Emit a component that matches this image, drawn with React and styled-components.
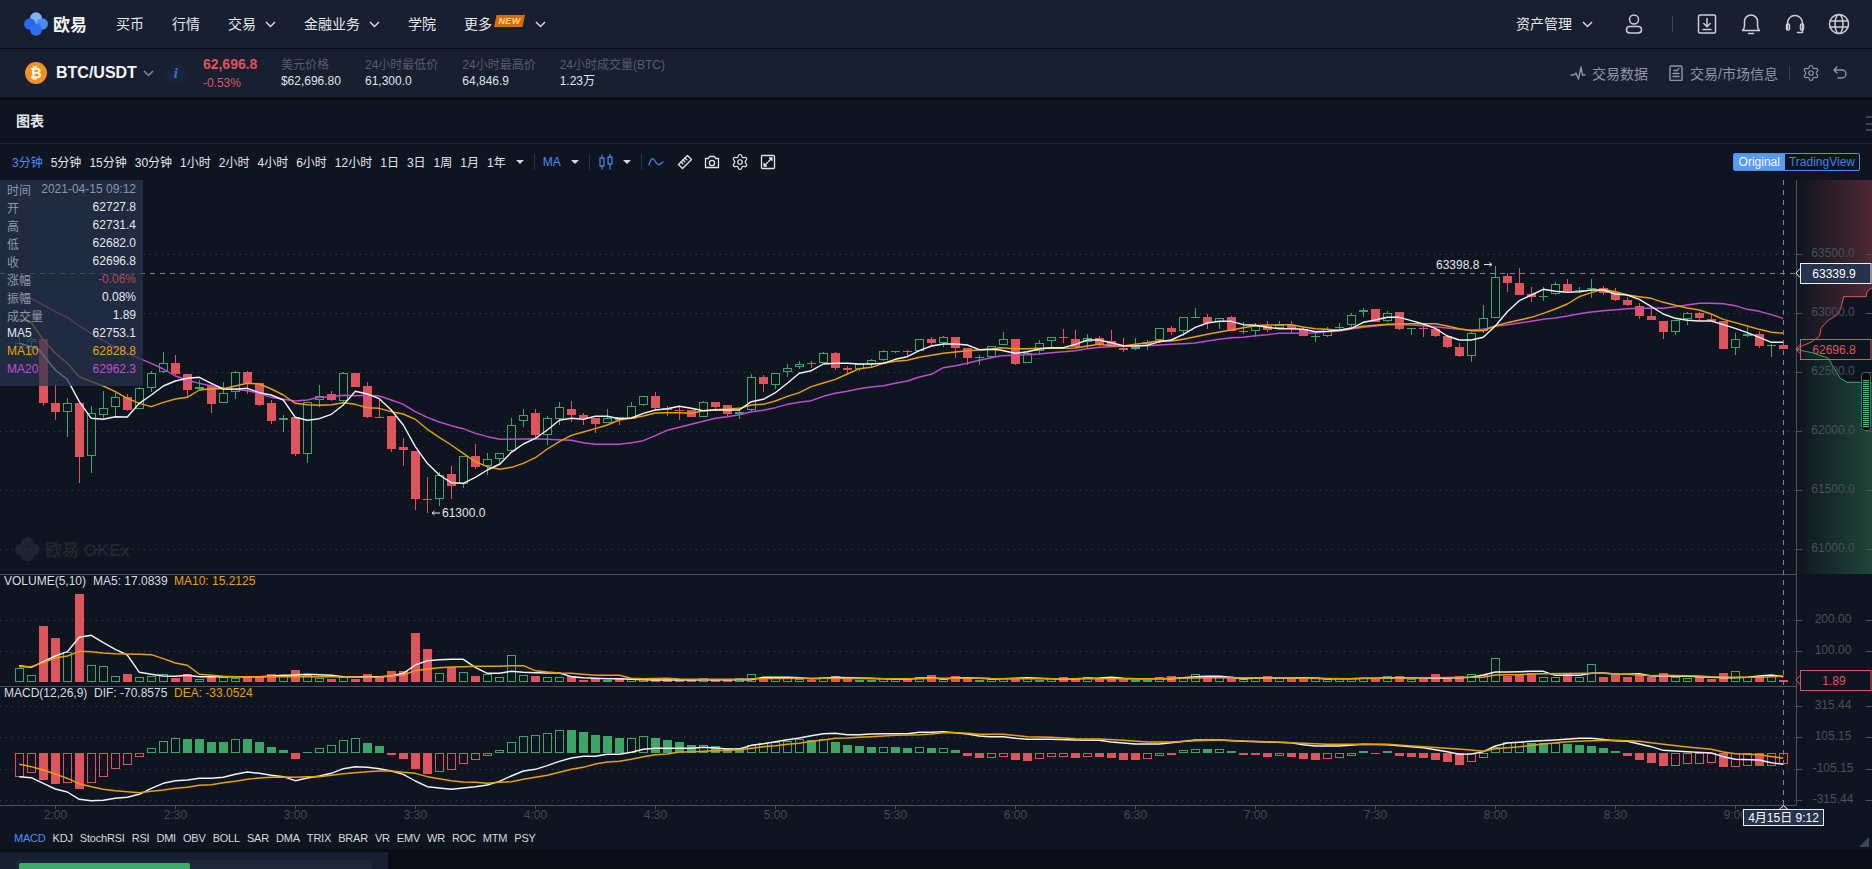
import React from "react";
import styled, { createGlobalStyle } from "styled-components";
import { Settings } from "lucide-react";

const GlobalStyle = createGlobalStyle`
  html, body {
    margin: 0;
    padding: 0;
    height: 100%;
    overflow: hidden;
    background: #0a0d15;
    font-family: "Liberation Sans", "Noto Sans CJK SC", sans-serif;
  }
  * { box-sizing: border-box; }
`;

const RED = "#dd555c";
const GREEN = "#3fa566";
const WHITE_LINE = "#f2f2f2";
const ORANGE = "#e9a00c";
const PURPLE = "#c04ccf";

// candle bodies and wicks, read off the picture at 3x: [top, bottom, wickTop, wickBottom, isRed]
const candleRows = [
  { base: 170, rows: [
    [520,532,498,540,0],[508,516,500,565,0],[507,698,507,708,1],[699,725,643,750,1],[700,725,685,800,0],
    [699,860,699,938,1],[730,859,708,908,0],[715,734,663,745,0],[682,712,668,745,0],[682,720,672,722,1],
    [655,716,650,718,0],[610,653,604,665,0],[580,607,546,610,0],[579,612,555,615,1],[612,660,612,682,1],
    [650,658,630,660,0],[648,701,640,728,1],[670,698,636,700,0],[607,667,603,687,0],[606,640,603,671,1],
    [640,705,640,708,1],[699,752,690,761,1],[745,751,735,785,0],[741,852,741,858,1],[695,853,695,878,0],
    [677,691,645,712,0],[673,690,663,692,1],[610,692,606,695,0],[609,650,609,650,1],[648,741,636,743,1],
    [742,743,690,743,1],[738,837,738,845,1],[832,839,805,888,1],[843,986,843,1020,1],[987,988,920,1028,1],
    [914,988,905,1007,0],[912,947,888,987,1],[859,943,859,953,0],[858,890,822,896,1],[868,888,850,914,0],
    [850,866,850,878,0],
  ]},
  { base: 280, rows: [
    [436,514,415,520,0],[406,424,388,440,0],[400,465,388,470,1],[415,466,407,494,0],[382,416,366,434,0],
    [387,405,363,425,1],[405,414,400,434,1],[414,432,414,458,1],[415,428,388,430,0],[412,420,412,434,1],
    [379,418,366,418,0],[349,374,349,378,0],[348,384,336,390,1],[384,389,379,407,1],[391,392,380,419,1],
    [390,411,390,412,1],[367,410,363,410,0],[366,381,366,392,1],[376,402,376,408,1],[395,401,390,416,0],
    [292,390,282,392,0],[291,312,286,335,1],[280,314,280,327,0],[265,277,252,291,0],[253,262,243,266,0],
    [249,250,243,264,1],[220,248,217,250,0],[219,264,216,270,1],[264,270,258,279,1],[252,268,252,272,0],
    [241,252,238,265,0],[214,239,210,242,0],[214,215,214,219,0],[213,214,210,228,1],[178,214,178,214,0],
    [178,189,171,195,1],[172,188,168,200,0],[171,204,171,234,1],[204,234,204,254,1],[232,233,226,254,0],
    [199,230,199,232,0],
  ]},
  { base: 250, rows: [
    [268,284,246,286,0],[267,342,267,345,1],[310,338,302,340,0],[278,302,270,315,0],[262,274,262,290,0],
    [262,263,237,279,1],[267,292,240,295,1],[265,276,252,295,0],[265,283,258,288,1],[274,287,240,290,1],
    [294,300,264,306,1],[290,296,264,301,0],[275,282,270,300,0],[235,271,235,280,0],[235,246,228,255,1],
    [202,244,200,258,0],[202,203,174,203,0],[202,220,192,237,1],[203,216,203,237,0],[202,242,197,243,1],
    [244,245,216,252,0],[229,242,220,261,0],[228,239,213,246,1],[224,234,213,236,0],[224,238,213,250,1],
    [238,258,230,258,1],[259,260,250,276,0],[236,257,232,262,0],[230,233,220,236,0],[194,226,190,232,0],
    [179,187,175,200,0],[178,215,178,215,1],[188,214,184,216,0],[186,237,186,240,1],[233,234,233,255,0],
    [233,234,225,261,1],[237,258,232,260,1],[259,291,255,293,1],[291,318,280,320,1],[248,317,246,335,0],
    [203,244,166,250,0],[82,203,48,203,0],
  ]},
  { base: 240, rows: [
    [107,129,100,155,1],[129,165,84,165,1],[162,171,141,185,1],[167,172,142,182,0],[133,163,127,165,0],
    [132,154,117,157,1],[150,151,140,160,0],[145,146,117,173,0],[145,158,138,164,1],[157,180,144,183,1],
    [180,194,172,197,1],[197,228,190,236,1],[228,239,208,240,1],[243,275,243,296,1],[241,277,240,284,0],
    [220,238,217,254,0],[219,234,215,242,1],[238,244,225,244,1],[244,326,244,327,1],[296,325,280,344,0],
    [283,289,260,290,0],[283,318,272,323,1],[315,316,312,350,0],[316,326,316,327,1],
  ]},
];

const candles = candleRows.flatMap(({ base, rows }) =>
  rows.map(([t, b, wt, wb, red]) => ({
    top: base + t / 3,
    bottom: base + b / 3,
    wickTop: base + wt / 3,
    wickBottom: base + wb / 3,
    red: !!red,
  }))
);

const volumes = [
  295,316,-168,-204,245,-72,286,289,319,-312,321,318,311,-323,-313,328,-319,322,325,-321,
  -320,-312,318,-300,314,325,-327,322,-327,-312,-320,-303,-303,-189,-237,310,-292,307,-318,313,
  322,256,316,-318,322,322,-317,-330,-325,329,-325,328,328,-325,-325,-327,-327,325,-327,-327,
  325,313,-325,325,323,328,-330,320,-318,-325,330,330,323,328,-327,320,-315,328,-318,-325,
  329,328,325,-325,325,329,325,-321,-325,322,-325,-322,-325,329,329,322,-318,322,313,-321,
  322,-322,328,325,-318,325,-325,-325,322,328,325,325,325,-325,319,-318,328,-325,-312,-322,
  -318,312,315,265,-318,-314,-310,320,320,-312,320,283,-322,-314,-322,-316,-322,-310,322,325,
  -322,-328,-310,304,322,-318,318,-331,
];

const macdValues = [
  620,608,630,642,638,657,638,620,596,584,
  560,535,514,505,507,507,516,516,508,507,
  516,531,540,567,547,533,526,511,505,519,
  528,555,567,598,612,605,601,581,569,557,
  541,517,499,495,490,481,480,486,495,498,
  504,505,499,504,510,516,525,526,529,534,
  534,525,520,516,512,508,510,507,516,525,
  528,531,532,531,534,532,534,535,540,558,
  564,563,560,570,573,567,560,560,564,560,
  561,564,570,570,567,557,555,541,538,537,
  538,543,555,555,561,557,561,567,570,567,
  564,557,543,552,543,558,561,564,570,576,
  585,575,563,532,517,517,520,520,520,521,
  526,529,535,543,557,570,579,587,587,581,
  581,578,590,590,587,587,587,583,
];
const macdKinds =
  "rrRRrRrrrr" + "rgggGGGGgG" + "GGGRgggggG" + "GRRRRrrrrr" + "ggggggGGGG" +
  "GggGGGGgGG" + "GgggggGgGG" + "GGgGGgGgGR" + "RrrRRrrrRr" + "RRRRrrRggG" +
  "gGRRRrRRRr" + "rrGRGRRRRR" + "RrrgggGGgG" + "GGGGRRRRrr" + "rrRrrRrr";

// glue pieces together: points of a later piece replace what came before from its first x on
const pieces = (...parts) =>
  parts.reduce((all, [xBase, yBase, pts]) => {
    const mapped = pts.map(([x, y]) => [xBase + x / 3, yBase + y / 3]);
    return [...all.filter((p) => p[0] < mapped[0][0]), ...mapped];
  }, []);

const toPoints = (pts) => pts.map(([x, y]) => `${x.toFixed(1)},${y.toFixed(1)}`).join(" ");

const ma5 = pieces(
  [0, 170, [[58,520],[94,530],[118,540],[166,600],[202,628],[238,695],[274,745],[310,748],[346,740],[382,741],[418,700],[454,675],[490,648],[526,633],[562,625],[598,622],[634,640],[670,657],[706,658],[742,655],[778,668],[814,675],[850,690],[886,742],[922,751],[958,746],[994,733],[1030,705],[1066,664],[1102,672],[1138,686],[1174,720],[1210,765],[1246,830],[1282,880],[1318,915],[1354,938],[1390,940],[1426,922],[1462,900],[1500,882]]],
  [500, 280, [[0,552],[34,517],[70,492],[106,475],[142,450],[178,421],[214,415],[250,418],[286,409],[322,409],[358,416],[394,414],[430,400],[466,390],[502,386],[538,379],[574,385],[610,392],[646,390],[682,390],[718,390],[754,365],[790,358],[826,338],[862,310],[898,280],[934,272],[970,252],[1006,250],[1042,250],[1078,252],[1114,252],[1150,250],[1186,238],[1222,230],[1258,212],[1294,198],[1330,192],[1366,192],[1402,195],[1438,209],[1474,208],[1500,212]]],
  [1000, 250, [[0,300],[46,310],[82,305],[118,297],[154,293],[190,293],[226,283],[262,270],[298,270],[334,278],[370,287],[406,288],[442,286],[478,275],[514,270],[550,253],[586,232],[622,219],[658,214],[694,214],[730,224],[766,226],[802,232],[838,236],[874,236],[910,238],[946,245],[982,244],[1018,241],[1054,235],[1090,217],[1126,210],[1162,202],[1198,202],[1234,212],[1270,222],[1306,235],[1342,258],[1378,270],[1414,270]]],
  [1400, 240, [[250,292],[286,258],[322,215],[358,182],[394,165],[430,148],[466,154],[502,157],[538,155],[574,150],[610,150],[646,162],[682,165],[718,178],[754,200],[790,222],[826,235],[862,241],[898,243],[934,243],[970,254],[1006,265],[1042,278],[1078,292],[1114,307],[1150,307]]]
);

const ma10 = pieces(
  [0, 170, [[58,447],[94,458],[130,510],[166,550],[202,580],[238,620],[274,635],[310,648],[346,665],[382,685],[418,700],[454,710],[490,697],[526,687],[562,682],[598,660],[634,656],[670,656],[706,648],[742,640],[778,642],[814,657],[850,675],[886,700],[922,704],[958,706],[994,704],[1030,698],[1066,703],[1102,713],[1138,715],[1174,725],[1210,732],[1246,748],[1282,778],[1318,802],[1354,825],[1390,850],[1426,875],[1462,890],[1500,898]]],
  [500, 280, [[0,568],[34,562],[70,550],[106,533],[142,507],[178,485],[214,466],[250,456],[286,446],[322,435],[358,420],[394,415],[430,408],[466,399],[502,398],[538,398],[574,400],[610,392],[646,389],[682,387],[718,385],[754,375],[790,373],[826,363],[862,349],[898,338],[934,320],[970,309],[1006,298],[1042,282],[1078,266],[1114,262],[1150,250],[1186,244],[1222,241],[1258,232],[1294,226],[1330,220],[1366,216],[1402,212],[1438,210],[1474,208],[1500,205]]],
  [1000, 250, [[0,293],[46,296],[82,296],[118,295],[154,294],[190,295],[226,294],[262,288],[298,283],[334,287],[370,288],[406,283],[442,278],[478,272],[514,273],[550,268],[586,260],[622,253],[658,246],[694,240],[730,233],[766,227],[802,225],[838,224],[874,224],[910,231],[946,236],[982,238],[1018,241],[1054,234],[1090,229],[1126,226],[1162,223],[1198,222],[1234,221],[1270,221],[1306,221],[1342,228],[1378,236],[1414,242]]],
  [1400, 240, [[250,272],[286,258],[322,248],[358,240],[394,232],[430,220],[466,207],[502,192],[538,170],[574,158],[610,148],[646,155],[682,165],[718,170],[754,175],[790,187],[826,196],[862,204],[898,210],[934,222],[970,238],[1006,248],[1042,258],[1078,268],[1114,277],[1150,280]]]
);

const ma20 = pieces(
  [0, 170, [[58,365],[94,385],[130,405],[166,425],[202,442],[238,468],[274,490],[310,512],[346,533],[382,550],[418,565],[454,580],[490,597],[526,618],[562,630],[598,640],[634,648],[670,655],[706,658],[742,662],[778,670],[814,682],[850,688],[886,693],[922,690],[958,682],[994,680],[1030,676],[1066,677],[1102,676],[1138,678],[1174,690],[1210,703],[1246,725],[1282,742],[1318,756],[1354,767],[1390,776],[1426,790],[1462,800],[1500,808]]],
  [500, 280, [[0,478],[70,477],[106,476],[142,478],[178,479],[214,481],[250,488],[286,493],[322,493],[358,493],[394,488],[430,482],[466,467],[502,451],[538,442],[574,433],[610,424],[646,415],[682,410],[718,404],[754,395],[790,391],[826,383],[862,373],[898,367],[934,362],[970,349],[1006,340],[1042,334],[1078,326],[1114,321],[1150,317],[1186,310],[1222,303],[1258,291],[1294,283],[1330,263],[1366,257],[1402,250],[1438,241],[1474,233],[1500,229]]],
  [1000, 250, [[0,318],[46,315],[82,314],[118,312],[154,308],[190,305],[226,302],[262,296],[298,292],[334,290],[370,288],[406,288],[442,287],[478,285],[514,283],[550,281],[586,279],[622,273],[658,268],[694,263],[730,262],[766,257],[802,254],[838,250],[874,250],[910,250],[946,248],[982,245],[1018,243],[1054,237],[1090,232],[1126,228],[1162,224],[1198,224],[1234,225],[1270,227],[1306,230],[1342,234],[1378,238],[1414,240]]],
  [1400, 240, [[250,268],[286,258],[322,254],[358,249],[394,244],[430,238],[466,234],[502,228],[538,221],[574,216],[610,212],[646,209],[682,206],[718,205],[754,205],[790,205],[826,200],[862,195],[898,190],[934,190],[970,191],[1006,197],[1042,208],[1078,214],[1114,224],[1150,235]]]
);

const volMa5 = pieces(
  [0, 570, [[58,287],[94,292],[130,275],[166,258],[202,245],[238,202],[274,196],[310,218],[346,238],[382,255],[418,307],[454,313],[490,318],[526,319],[562,316],[598,320],[634,320],[670,320],[706,320],[742,320],[778,320],[814,318],[850,316],[886,315],[922,313],[958,314],[994,316],[1030,320],[1066,321],[1102,320],[1138,320],[1174,318],[1210,310],[1246,285],[1282,272],[1318,269],[1354,268],[1390,268],[1426,292],[1462,310],[1500,312]]],
  [490, 570, [[28,310],[64,304],[100,307],[136,308],[172,309],[208,309],[244,320],[280,323],[316,325],[352,326],[388,326],[424,328],[460,329],[496,330],[784,329],[820,322],[856,322],[892,322],[928,323],[964,326],[1000,325],[1036,322],[1072,323],[1108,324],[1144,325],[1180,326],[1216,327],[1252,327],[1288,325],[1324,323],[1360,327],[1396,324],[1432,323],[1468,325],[1500,326]]],
  [980, 570, [[34,327],[70,326],[106,325],[142,323],[178,325],[214,326],[250,327],[286,326],[322,325],[358,324],[394,322],[430,325],[466,326],[502,326],[538,326],[574,326],[610,323],[646,320],[682,319],[718,319],[754,322],[790,326],[826,324],[862,323],[898,324],[934,324],[970,323],[1006,325],[1042,326],[1078,326],[1114,326],[1150,325],[1186,325],[1222,324],[1258,323],[1294,323],[1330,323],[1366,325],[1402,324],[1438,323],[1474,322]]],
  [1400, 570, [[250,315],[286,306],[322,306],[358,305],[394,304],[430,304],[466,316],[502,316],[538,316],[574,310],[610,309],[646,312],[682,313],[718,311],[754,318],[790,318],[826,319],[862,319],[898,320],[934,322],[970,323],[1006,323],[1042,322],[1078,318],[1114,315],[1150,320]]]
);

const volMa10 = pieces(
  [0, 570, [[58,290],[94,290],[130,278],[166,264],[202,258],[238,244],[274,245],[310,249],[346,251],[382,252],[418,253],[454,254],[490,266],[526,279],[562,286],[598,313],[634,316],[670,319],[706,320],[1000,320],[1030,322],[1102,322],[1138,321],[1174,318],[1210,315],[1246,302],[1282,297],[1318,293],[1354,291],[1390,290],[1426,289],[1500,289]]],
  [490, 570, [[28,289],[64,287],[100,287],[136,302],[172,306],[208,309],[244,310],[280,313],[316,316],[388,316],[424,325],[460,326],[532,325],[568,327],[604,328],[748,328],[784,326],[1000,325],[1180,326],[1288,326],[1324,325],[1500,325]]],
  [980, 570, [[34,326],[500,326],[700,323],[900,324],[1100,326],[1200,325],[1474,322]]],
  [1400, 570, [[250,322],[286,315],[322,314],[358,314],[394,312],[430,311],[574,310],[610,310],[646,312],[682,313],[718,315],[754,317],[790,316],[862,317],[898,318],[934,320],[970,321],[1006,322],[1078,322],[1114,320],[1150,318]]]
);

const dif = pieces(
  [0, 570, [[58,620],[94,623],[130,640],[166,657],[202,666],[238,688],[274,692],[310,691],[346,685],[382,682],[418,673],[454,655],[490,640],[526,632],[562,630],[598,625],[634,625],[670,622],[706,613],[742,606],[778,610],[814,616],[850,620],[886,632],[922,624],[958,618],[994,610],[1030,596],[1066,590],[1102,592],[1138,596],[1174,603],[1210,613],[1246,633],[1282,650],[1318,654],[1354,658],[1390,654],[1426,650],[1462,645],[1500,638]]],
  [490, 570, [[28,634],[64,618],[100,603],[136,598],[172,587],[208,574],[244,564],[280,559],[316,559],[352,553],[388,553],[424,547],[460,538],[496,535],[604,535],[640,532],[676,534],[712,537],[748,537],[784,526],[820,521],[856,515],[892,509],[928,504],[964,497],[1000,491],[1036,490],[1072,494],[1108,494],[1144,492],[1180,491],[1252,491],[1288,487],[1324,487],[1360,485],[1396,488],[1432,492],[1468,498],[1500,500]]],
  [980, 570, [[34,500],[70,500],[106,505],[142,508],[214,508],[286,510],[358,511],[394,516],[466,522],[538,522],[574,518],[646,510],[718,510],[790,514],[862,516],[934,518],[970,524],[1006,528],[1078,528],[1150,523],[1222,524]]],
  [1400, 570, [[70,533],[142,545],[178,553],[214,552],[250,545],[286,528],[322,519],[394,514],[466,510],[538,505],[574,505],[646,512],[682,514],[754,530],[790,541],[862,545],[934,549],[970,560],[1006,568],[1078,570],[1114,578],[1150,583]]]
);

const dea = pieces(
  [0, 570, [[58,583],[94,590],[130,600],[166,612],[202,625],[238,641],[274,650],[310,658],[346,662],[382,665],[418,668],[454,664],[490,660],[526,655],[562,652],[598,646],[634,644],[670,638],[706,634],[742,628],[778,624],[814,622],[850,621],[886,622],[922,620],[958,620],[994,616],[1030,611],[1066,608],[1102,605],[1138,603],[1174,603],[1210,607],[1246,610],[1282,620],[1318,626],[1354,632],[1390,636],[1426,637],[1462,640],[1500,636]]],
  [490, 570, [[28,637],[64,635],[100,628],[136,622],[172,616],[208,607],[244,598],[280,592],[316,582],[352,576],[388,574],[424,568],[460,560],[496,554],[532,552],[568,546],[604,546],[640,544],[676,542],[712,541],[748,539],[784,535],[820,530],[856,527],[892,523],[928,520],[964,514],[1000,510],[1036,505],[1072,504],[1108,502],[1144,500],[1180,498],[1216,496],[1252,495],[1288,494],[1324,492],[1360,488],[1396,488],[1432,490],[1468,493],[1500,493]]],
  [980, 570, [[34,493],[70,493],[142,500],[214,502],[286,506],[358,507],[430,511],[502,516],[574,516],[646,512],[718,510],[790,513],[862,515],[934,518],[1006,521],[1042,523],[1222,523]]],
  [1400, 570, [[70,530],[142,535],[214,540],[250,544],[286,536],[358,530],[430,522],[502,515],[574,512],[646,511],[718,514],[790,523],[862,531],[934,538],[970,546],[1006,551],[1078,554],[1150,565]]]
);

const candleX = (i) => 19.5 + 12 * i;
const AXIS_X = 1796.5;

const priceGrid = [
  { y: 254.5, label: "63500.0" }, { y: 313.5, label: "63000.0" }, { y: 372.5, label: "62500.0" },
  { y: 431.5, label: "62000.0" }, { y: 490.5, label: "61500.0" }, { y: 549.5, label: "61000.0" },
];
const volGrid = [{ y: 620.5, label: "200.00" }, { y: 651.5, label: "100.00" }];
const macdGrid = [
  { y: 706.5, label: "315.44" }, { y: 737.5, label: "105.15" },
  { y: 769.5, label: "-105.15" }, { y: 800.5, label: "-315.44" },
];
const timeLabels = ["2:00","2:30","3:00","3:30","4:00","4:30","5:00","5:30","6:00","6:30","7:00","7:30","8:00","8:30","9:00"];

const redDepth = pieces([1772, 170, [[75,538],[90,528],[120,515],[143,498],[147,475],[155,465],[170,450],[195,435],[205,420],[215,380],[283,380],[285,365],[296,355],[300,355]]]);
const greenDepth = pieces([1772, 170, [[75,538],[90,542],[120,548],[170,565],[180,585],[205,625],[225,637],[270,637],[300,640]]]);

const Page = styled.div`
  width: 1872px;
  height: 869px;
  overflow: hidden;
  display: flex;
  flex-direction: column;
`;

const TopBar = styled.header`
  height: 49px;
  flex: none;
  display: flex;
  align-items: center;
  justify-content: space-between;
  padding: 0 22px 1px 24px;
  background: #181f30;
  border-bottom: 1px solid #0c0f17;
  color: #e4e7ec;
  font-size: 14px;
`;

const Left = styled.div`
  display: flex;
  align-items: center;
`;

const Logo = styled.div`
  display: flex;
  align-items: center;
  gap: 5px;
  margin-right: 29px;
  color: #f4f5f7;
  font-size: 17px;
  font-weight: 700;
`;

const Nav = styled.nav`
  display: flex;
  align-items: center;
  gap: 28px;
`;

const NavItem = styled.span`
  display: flex;
  align-items: center;
  padding-bottom: 2px;
  gap: ${(p) => (p.$tight ? "2px" : "0")};
`;

const Chevron = styled.svg`
  width: 11px;
  height: 7px;
  margin-left: ${(p) => p.$gap || 9}px;
  margin-top: ${(p) => p.$drop ?? 3}px;
  flex: none;
`;

const NewBadge = styled.span`
  width: 31px;
  height: 12px;
  background: #d96c07;
  clip-path: polygon(8% 0, 100% 0, 92% 100%, 0 100%);
  color: #ffd58f;
  font-size: 9px;
  font-weight: 700;
  font-style: italic;
  letter-spacing: 0.3px;
  line-height: 12px;
  text-align: center;
  margin-top: -3px;
`;

const UserTools = styled.div`
  display: flex;
  align-items: center;
`;

const ToolIcon = styled.svg`
  width: 22px;
  height: 22px;
  flex: none;
  margin-left: ${(p) => p.$left ?? 22}px;
  fill: none;
  stroke: #c9ced6;
  stroke-width: 1.5;
  stroke-linecap: round;
  stroke-linejoin: round;
`;

const Divider = styled.span`
  width: 1px;
  height: ${(p) => p.$h || 16}px;
  background: ${(p) => p.$c || "#3a4252"};
  margin-left: ${(p) => p.$left ?? 0}px;
  flex: none;
`;

const MarketBar = styled.section`
  height: 48px;
  flex: none;
  display: flex;
  align-items: center;
  justify-content: space-between;
  padding: 0 24px 0 25px;
  background: #181f30;
`;

const Coin = styled.span`
  width: 22px;
  height: 22px;
  border-radius: 50%;
  background: #f39221;
  color: #fff;
  font-family: "DejaVu Sans", sans-serif;
  font-size: 14px;
  font-weight: 700;
  line-height: 22px;
  text-align: center;
`;

const Pair = styled.span`
  margin-left: 9px;
  color: #f4f5f7;
  font-size: 16px;
  font-weight: 700;
`;

const InfoDot = styled.span`
  width: 20px;
  height: 20px;
  margin-left: 12px;
  margin-right: 17px;
  border-radius: 50%;
  background: #1a2438;
  color: #2a74e6;
  font-family: "Liberation Serif", serif;
  font-style: italic;
  font-weight: 700;
  font-size: 15px;
  line-height: 20px;
  text-align: center;
`;

const PriceBox = styled.div`
  width: 78px;
  color: ${RED};
`;

const LastPrice = styled.div`
  font-size: 14px;
  font-weight: 700;
  line-height: 18px;
`;

const PriceChange = styled.div`
  font-size: 12px;
  line-height: 16px;
  margin-top: 2px;
`;

const Stats = styled.div`
  display: flex;
  gap: 24px;
`;

const Stat = styled.div`
  font-size: 12px;
  line-height: 16px;
`;

const StatLabel = styled.div`
  color: #545c6e;
`;

const StatValue = styled.div`
  color: #dfe4ea;
`;

const MarketLinks = styled.div`
  display: flex;
  align-items: center;
  color: #8d96a8;
  font-size: 14px;
`;

const MarketIcon = styled.svg`
  width: 16px;
  height: 16px;
  flex: none;
  margin-left: ${(p) => p.$left ?? 0}px;
  margin-right: ${(p) => p.$right ?? 0}px;
  fill: none;
  stroke: #8d96a8;
  stroke-width: 1.4;
  stroke-linecap: round;
  stroke-linejoin: round;
`;

const MarketGear = styled(Settings)`
  width: 18px;
  height: 18px;
  flex: none;
  margin-left: 12px;
  stroke: #8d96a8;
  stroke-width: 1.6;
`;

const ChartPanel = styled.main`
  margin-top: 3px;
  flex: none;
  background: #0f1520;
`;

const PanelTitleBar = styled.div`
  height: 44px;
  display: flex;
  align-items: center;
  justify-content: space-between;
  padding: 0 0 3px 16px;
  border-bottom: 1px solid #1c2331;
  color: #e4e7ec;
  font-size: 14px;
  font-weight: 700;
`;

const Hamburger = styled.span`
  width: 6px;
  height: 15px;
  margin-top: 6px;
  background: repeating-linear-gradient(#3a4150 0 2px, transparent 2px 6.5px);
`;

const Toolbar = styled.div`
  height: 36px;
  display: flex;
  align-items: center;
  padding: 0 12px 1px;
  color: #e2e5ea;
  font-size: 12px;
`;

const Interval = styled.span`
  margin-right: 8px;
  color: ${(p) => (p.$active ? "#4a8df0" : "inherit")};
`;

const Caret = styled.span`
  width: 0;
  height: 0;
  margin-left: ${(p) => p.$left ?? 2}px;
  border-left: 4px solid transparent;
  border-right: 4px solid transparent;
  border-top: 4px solid #d4d8de;
`;

const ToolbarRule = styled.span`
  width: 1px;
  height: 16px;
  margin: 0 ${(p) => p.$right ?? 8}px 0 10px;
  background: #2c3443;
`;

const DrawIcon = styled.svg`
  width: 16px;
  height: 16px;
  flex: none;
  margin-right: ${(p) => p.$right ?? 12}px;
  fill: none;
  stroke: ${(p) => p.$c || "#e2e5ea"};
  stroke-width: 1.3;
  stroke-linecap: round;
  stroke-linejoin: round;
`;

const ToolbarGear = styled(Settings)`
  width: 18px;
  height: 18px;
  flex: none;
  margin-right: 11px;
  stroke: #e2e5ea;
  stroke-width: 1.6;
`;

const Switcher = styled.div`
  margin-left: auto;
  display: flex;
  height: 18px;
  border: 1px solid #4a8df0;
  border-radius: 2px;
  font-size: 12px;
  line-height: 16px;
`;

const SwitchOption = styled.span`
  padding: 0 ${(p) => (p.$on ? "5px" : "4px")};
  background: ${(p) => (p.$on ? "#5a9bf2" : "transparent")};
  color: ${(p) => (p.$on ? "#f3f7fd" : "#3f7fe6")};
`;

const ChartArea = styled.div`
  position: relative;
  height: 669px;
`;

const ChartSvg = styled.svg`
  display: block;
  width: 1872px;
  height: 669px;
  font-family: "Liberation Sans", "Noto Sans CJK SC", sans-serif;
  font-size: 12px;
`;

const InfoPanel = styled.div`
  position: absolute;
  left: 0;
  top: 0;
  width: 143px;
  height: 206px;
  padding: 0 7px;
  background: rgba(39, 53, 77, 0.72);
  font-size: 12px;
`;

const InfoRow = styled.div`
  height: 18px;
  display: flex;
  align-items: center;
  justify-content: space-between;
  color: ${(p) => p.$c || "#e6e8ec"};
`;

const InfoLabel = styled.span`
  color: ${(p) => p.$c || "#8e96a4"};
`;

const IndicatorRow = styled.div`
  position: absolute;
  left: 14px;
  top: 650px;
  display: flex;
  gap: 7px;
  color: #d5d9df;
  font-size: 11px;
  letter-spacing: -0.2px;
  line-height: 16px;
`;

const Indicator = styled.span`
  color: ${(p) => (p.$active ? "#4a8df0" : "inherit")};
`;

const BottomRow = styled.div`
  margin-top: 3px;
  width: 388px;
  height: 30px;
  padding: 8px 16px 0;
  background: #181f30;
`;

const TradeCard = styled.div`
  display: flex;
  height: 30px;
  padding: 3px;
  border-radius: 3px;
  background: #1e2637;
`;

const TradeTab = styled.span`
  width: 171px;
  height: 30px;
  border-radius: 2px;
  background: ${(p) => (p.$on ? "#3dad6b" : "transparent")};
  color: ${(p) => (p.$on ? "#fff" : "#8d96a8")};
  font-size: 14px;
  line-height: 26px;
  text-align: center;
`;

const ChevronIcon = ({ gap, color = "#d5d9df", drop }) => (
  <Chevron $gap={gap} $drop={drop} viewBox="0 0 11 7" fill="none" stroke={color} strokeWidth="1.5">
    <path d="M1 1l4.5 4.5L10 1" />
  </Chevron>
);

const LogoMark = ({ size = 24, mono }) => (
  <svg width={size} height={size} viewBox="0 0 24 24" style={{ flex: "none" }}>
    <circle cx="12" cy="6.3" r="6" fill={mono || "#7db4f6"} />
    <circle cx="5.8" cy="12" r="5.8" fill={mono || "#2b68e8"} />
    <circle cx="18.2" cy="12" r="5.8" fill={mono || "#4a8bf0"} />
    <circle cx="12" cy="17.7" r="6" fill={mono || "#2f6fee"} />
  </svg>
);

const Candle = ({ c, i }) => {
  const x = candleX(i);
  const color = c.red ? RED : GREEN;
  const top = Math.round(c.top);
  const bottom = Math.max(Math.round(c.bottom), top + 1);
  if (c.red || bottom - top < 3) {
    return (
      <g>
        <rect x={x - 0.5} y={c.wickTop} width="1" height={c.wickBottom - c.wickTop} fill={color} />
        <rect x={x - 4.5} y={top} width="9" height={bottom - top} fill={color} />
      </g>
    );
  }
  return (
    <g>
      <rect x={x - 0.5} y={c.wickTop} width="1" height={top - c.wickTop} fill={color} />
      <rect x={x - 0.5} y={bottom} width="1" height={Math.max(c.wickBottom - bottom, 0)} fill={color} />
      <rect x={x - 4} y={top + 0.5} width="8" height={bottom - top - 1} fill="none" stroke={color} />
    </g>
  );
};

const BarShape = ({ i, top, bottom, red, hollow }) => {
  const x = candleX(i);
  const color = red ? RED : GREEN;
  const y1 = Math.round(top);
  const y2 = Math.max(Math.round(bottom), y1 + 1);
  return hollow && y2 - y1 > 1 ? (
    <rect x={x - 4} y={y1 + 0.5} width="8" height={y2 - y1 - 1} fill="none" stroke={color} />
  ) : (
    <rect x={x - 4.5} y={y1} width="9" height={y2 - y1} fill={color} />
  );
};

const Line = ({ pts, color }) => (
  <polyline points={toPoints(pts)} fill="none" stroke={color} strokeWidth="1.4" strokeLinejoin="round" />
);

const GridLines = ({ rows }) =>
  rows.map((r) => (
    <line key={r.y} x1="0" x2={AXIS_X} y1={r.y} y2={r.y} stroke="#3b424e" strokeDasharray="1 5" />
  ));

const AxisMarks = ({ rows, textOffset = 2 }) =>
  rows.map((r) => (
    <g key={r.y}>
      <line x1={AXIS_X} x2="1802" y1={r.y} y2={r.y} stroke="#4a505c" />
      <line x1="1866" x2="1872" y1={r.y} y2={r.y} stroke="#4a505c" />
      <text x="1833" y={r.y + textOffset} textAnchor="middle" fill="#484e5b">{r.label}</text>
    </g>
  ));

const PriceTag = ({ y, h = 20, text, stroke, fill, color }) => (
  <g>
    <path d={`M1800 ${y + h / 2 - 4.5}L1796 ${y + h / 2}L1800 ${y + h / 2 + 4.5}`} fill="none" stroke={stroke} />
    <rect x="1800.5" y={y + 0.5} width="70.5" height={h} fill={fill} stroke={stroke} />
    <text x="1834" y={y + h / 2 + 4.5} textAnchor="middle" fill={color}>{text}</text>
  </g>
);

const StockChart = () => (
  <ChartSvg viewBox="0 180 1872 669">
    <defs>
      <linearGradient id="askFill" gradientUnits="userSpaceOnUse" x1="1797" x2="1872" y1="0" y2="0">
        <stop offset="0" stopColor={RED} stopOpacity="0" />
        <stop offset="1" stopColor={RED} stopOpacity="0.3" />
      </linearGradient>
      <linearGradient id="bidFill" gradientUnits="userSpaceOnUse" x1="1797" x2="1872" y1="0" y2="0">
        <stop offset="0" stopColor={GREEN} stopOpacity="0" />
        <stop offset="1" stopColor={GREEN} stopOpacity="0.34" />
      </linearGradient>
    </defs>

    {/* depth behind the price axis */}
    <polygon points={`1797,180 ${toPoints(redDepth)} 1872,180`} fill="url(#askFill)" />
    <polygon points={`${toPoints(greenDepth)} 1872,574 1797,574`} fill="url(#bidFill)" />
    <polyline points={toPoints(redDepth)} fill="none" stroke={RED} />
    <polyline points={toPoints(greenDepth)} fill="none" stroke={GREEN} />

    {/* watermark */}
    <g transform="translate(15 537)">
      <LogoMark size={25} mono="#1e2531" />
    </g>
    <text x="45" y="556" fill="#1e2531" fontSize="17" fontWeight="700">欧易 OKEx</text>

    <GridLines rows={priceGrid} />
    <GridLines rows={volGrid} />
    <GridLines rows={macdGrid} />

    <g shapeRendering="crispEdges">
      {candles.map((c, i) => <Candle key={i} c={c} i={i} />)}
    </g>
    <Line pts={ma20} color={PURPLE} />
    <Line pts={ma10} color={ORANGE} />
    <Line pts={ma5} color={WHITE_LINE} />

    <g shapeRendering="crispEdges">
      {volumes.map((v, i) => (
        <BarShape
          key={i}
          i={i}
          top={570 + Math.abs(v) / 3}
          bottom={682}
          red={v < 0}
          hollow={v > 0 && i !== 70 && i !== 71}
        />
      ))}
    </g>
    <Line pts={volMa5} color={WHITE_LINE} />
    <Line pts={volMa10} color={ORANGE} />

    <g shapeRendering="crispEdges">
      {macdValues.map((v, i) => {
        const kind = macdKinds[i];
        const red = kind === "r" || kind === "R";
        const edge = 570 + v / 3;
        return (
          <BarShape
            key={i}
            i={i}
            top={red ? 753 : edge}
            bottom={red ? edge : 753}
            red={red}
            hollow={kind === "r" || kind === "g"}
          />
        );
      })}
    </g>
    <Line pts={dif} color={WHITE_LINE} />
    <Line pts={dea} color={ORANGE} />

    {/* frame */}
    <line x1="0" x2={AXIS_X} y1="574.5" y2="574.5" stroke="#4a505c" />
    <line x1="0" x2={AXIS_X} y1="686.5" y2="686.5" stroke="#4a505c" />
    <line x1="0" x2={AXIS_X} y1="805.5" y2="805.5" stroke="#4a505c" />
    <line x1={AXIS_X} x2={AXIS_X} y1="180" y2="805" stroke="#4a505c" />

    <AxisMarks rows={priceGrid} />
    <AxisMarks rows={volGrid} />
    <AxisMarks rows={macdGrid} />

    {timeLabels.map((t, i) => (
      <g key={t}>
        <line x1={55.5 + 120 * i} x2={55.5 + 120 * i} y1="805" y2="809" stroke="#4a505c" />
        <text x={55.5 + 120 * i} y="819" textAnchor="middle" fill="#424854">{t}</text>
      </g>
    ))}

    <text y="585" fill="#d8dce2">
      <tspan x="4">VOLUME(5,10)</tspan>
      <tspan x="93">MA5: 17.0839</tspan>
      <tspan x="174" fill={ORANGE}>MA10: 15.2125</tspan>
    </text>
    <text y="697" fill="#d8dce2">
      <tspan x="4">MACD(12,26,9)</tspan>
      <tspan x="94">DIF: -70.8575</tspan>
      <tspan x="174" fill={ORANGE}>DEA: -33.0524</tspan>
    </text>

    <text x="1436" y="268.5" fill="#e4e6ea">63398.8</text>
    <path d="M1484 264.5h8M1489.5 262.5l2.5 2-2.5 2" fill="none" stroke="#e4e6ea" />
    <path d="M432 513h8M434.5 511l-2.5 2 2.5 2" fill="none" stroke="#e4e6ea" />
    <text x="442" y="516.5" fill="#e4e6ea">61300.0</text>

    {/* crosshair */}
    <line x1="0" x2={AXIS_X} y1="273.5" y2="273.5" stroke="#7d828c" strokeDasharray="5 5" />
    <line x1="1783.5" x2="1783.5" y1="180" y2="810" stroke="#7d828c" strokeDasharray="5 5" />

    <PriceTag y={263} text="63339.9" stroke="#eef0f3" fill="#24344d" color="#fff" />
    <PriceTag y={339} text="62696.8" stroke={RED} fill="none" color={RED} />
    <PriceTag y={670} text="1.89" stroke={RED} fill="none" color={RED} />

    <path d="M1779 809.5L1783.5 805.5L1788 809.5" fill="#24344d" stroke="#eef0f3" />
    <rect x="1743.5" y="809.5" width="80" height="16" fill="#24344d" stroke="#eef0f3" />
    <text x="1783.5" y="822" textAnchor="middle" fill="#fff">4月15日 9:12</text>

    {/* depth slider and the corner grip */}
    <rect x="1861.5" y="372.5" width="9" height="58" rx="3" fill="#05070b" stroke="#5a606a" />
    <line x1="1866" x2="1866" y1="380" y2="428" stroke="#3fc06f" strokeWidth="6" strokeDasharray="1.2 0.8" />
    <polygon points="1869,837 1869,847 1859,847" fill="#39465a" />
  </ChartSvg>
);

const intervals = ["3分钟","5分钟","15分钟","30分钟","1小时","2小时","4小时","6小时","12小时","1日","3日","1周","1月","1年"];
const infoRows = [
  ["开", "62727.8"], ["高", "62731.4"], ["低", "62682.0"], ["收", "62696.8"],
];
const indicators = ["KDJ","StochRSI","RSI","DMI","OBV","BOLL","SAR","DMA","TRIX","BRAR","VR","EMV","WR","ROC","MTM","PSY"];

export default function App() {
  return (
    <Page>
      <GlobalStyle />
      <TopBar>
        <Left>
          <Logo>
            <LogoMark />
            欧易
          </Logo>
          <Nav>
            <NavItem>买币</NavItem>
            <NavItem>行情</NavItem>
            <NavItem>交易<ChevronIcon /></NavItem>
            <NavItem>金融业务<ChevronIcon /></NavItem>
            <NavItem>学院</NavItem>
            <NavItem $tight>更多<NewBadge>NEW</NewBadge><ChevronIcon gap={8} /></NavItem>
          </Nav>
        </Left>
        <UserTools>
          <NavItem>资产管理<ChevronIcon gap={10} /></NavItem>
          <ToolIcon $left={30} viewBox="0 0 22 22">
            <circle cx="11" cy="6.5" r="4.5" />
            <rect x="3.5" y="13.5" width="15" height="6.5" rx="3.2" />
          </ToolIcon>
          <Divider $left={27} />
          <ToolIcon $left={23} viewBox="0 0 22 22">
            <rect x="2.5" y="2" width="17" height="18" rx="1.5" />
            <path d="M11 5.5v8M7.8 10.5l3.2 3.2 3.2-3.2M7 16.5h8" />
          </ToolIcon>
          <ToolIcon viewBox="0 0 22 22">
            <path d="M2.5 17.5c1.5-1.2 2-2.6 2-5V8.5a6.5 6.5 0 0 1 13 0v4c0 2.4.5 3.8 2 5z" />
            <path d="M8.5 20.5h5" />
          </ToolIcon>
          <ToolIcon viewBox="0 0 22 22">
            <path d="M3.5 16V10a7.5 7.5 0 0 1 15 0v6" />
            <rect x="2.5" y="11" width="3" height="6" rx="1.2" />
            <rect x="16.5" y="11" width="3" height="6" rx="1.2" />
            <path d="M18.5 17v2.5h-5" />
          </ToolIcon>
          <ToolIcon viewBox="0 0 22 22">
            <circle cx="11" cy="11" r="9.5" />
            <ellipse cx="11" cy="11" rx="4" ry="9.5" />
            <path d="M2 8h18M2 14h18" />
          </ToolIcon>
        </UserTools>
      </TopBar>

      <MarketBar>
        <Left>
          <Coin>₿</Coin>
          <Pair>BTC/USDT</Pair>
          <ChevronIcon gap={6} color="#7f8899" drop={0} />
          <InfoDot>i</InfoDot>
          <PriceBox>
            <LastPrice>62,696.8</LastPrice>
            <PriceChange>-0.53%</PriceChange>
          </PriceBox>
          <Stats>
            <Stat><StatLabel>美元价格</StatLabel><StatValue>$62,696.80</StatValue></Stat>
            <Stat><StatLabel>24小时最低价</StatLabel><StatValue>61,300.0</StatValue></Stat>
            <Stat><StatLabel>24小时最高价</StatLabel><StatValue>64,846.9</StatValue></Stat>
            <Stat><StatLabel>24小时成交量(BTC)</StatLabel><StatValue>1.23万</StatValue></Stat>
          </Stats>
        </Left>
        <MarketLinks>
          <MarketIcon $right={6} viewBox="0 0 16 16">
            <path d="M1 10h3l2-2 2.5 6L11 2l1.5 8H15" />
          </MarketIcon>
          交易数据
          <MarketIcon $left={20} $right={6} viewBox="0 0 16 16">
            <rect x="2" y="1" width="12" height="14.5" rx="1" />
            <path d="M5 11.5h6M5 8.5h6M6 5.5h3l2-2" />
          </MarketIcon>
          交易/市场信息
          <Divider $left={11} $h={14} />
          <MarketGear />
          <MarketIcon $left={12} viewBox="0 0 16 16">
            <path d="M5 2L2 5l3 3M2 5h8a4 4 0 0 1 0 8H6" />
          </MarketIcon>
        </MarketLinks>
      </MarketBar>

      <ChartPanel>
        <PanelTitleBar>
          图表
          <Hamburger />
        </PanelTitleBar>
        <Toolbar>
          {intervals.map((t, i) => (
            <Interval key={t} $active={i === 0}>{t}</Interval>
          ))}
          <Caret />
          <ToolbarRule />
          <Interval $active>MA</Interval>
          <Caret />
          <ToolbarRule />
          <DrawIcon $c="#3f7fe6" $right={7} viewBox="0 0 16 16">
            <rect x="2" y="4" width="4" height="8" />
            <rect x="10" y="3" width="4" height="7" />
            <path d="M4 1.5V4M4 12v3M12 .5V3M12 10v5" />
          </DrawIcon>
          <Caret />
          <ToolbarRule $right={6} />
          <DrawIcon $c="#3f7fe6" $right={13} viewBox="0 0 16 16">
            <path d="M1 11c2-7 4-8 6-4s4 5 8 1" />
          </DrawIcon>
          <DrawIcon $right={11} viewBox="0 0 16 16">
            <path d="M10.5 1.5l4 4-9 9-4-4z" />
            <path d="M8 4l1.8 1.8M6 6l1.8 1.8M4 8l1.8 1.8" />
          </DrawIcon>
          <DrawIcon $right={11} viewBox="0 0 16 16">
            <path d="M1.5 4.5h3l1-2h5l1 2h3v9h-13z" />
            <circle cx="8" cy="9" r="2.6" />
          </DrawIcon>
          <ToolbarGear />
          <DrawIcon viewBox="0 0 16 16">
            <rect x="1.5" y="1.5" width="13" height="13" rx="1" />
            <path d="M8.5 7.5l3.5-3.5M9.5 4H12v2.5M7.5 8.5L4 12M6.5 12H4V9.5" />
          </DrawIcon>
          <Switcher>
            <SwitchOption $on>Original</SwitchOption>
            <SwitchOption>TradingView</SwitchOption>
          </Switcher>
        </Toolbar>
        <ChartArea>
          <StockChart />
          <InfoPanel>
            <InfoRow $c="#8e96a4"><InfoLabel>时间</InfoLabel>2021-04-15 09:12</InfoRow>
            {infoRows.map(([label, value]) => (
              <InfoRow key={label}><InfoLabel>{label}</InfoLabel>{value}</InfoRow>
            ))}
            <InfoRow $c="#b5474f"><InfoLabel>涨幅</InfoLabel>-0.06%</InfoRow>
            <InfoRow><InfoLabel>振幅</InfoLabel>0.08%</InfoRow>
            <InfoRow><InfoLabel>成交量</InfoLabel>1.89</InfoRow>
            <InfoRow><InfoLabel $c="#e6e8ec">MA5</InfoLabel>62753.1</InfoRow>
            <InfoRow $c={ORANGE}><InfoLabel $c={ORANGE}>MA10</InfoLabel>62828.8</InfoRow>
            <InfoRow $c={PURPLE}><InfoLabel $c={PURPLE}>MA20</InfoLabel>62962.3</InfoRow>
          </InfoPanel>
          <IndicatorRow>
            <Indicator $active>MACD</Indicator>
            {indicators.map((t) => <Indicator key={t}>{t}</Indicator>)}
          </IndicatorRow>
        </ChartArea>
      </ChartPanel>

      <BottomRow>
        <TradeCard>
          <TradeTab $on>买入</TradeTab>
          <TradeTab>卖出</TradeTab>
        </TradeCard>
      </BottomRow>
    </Page>
  );
}
